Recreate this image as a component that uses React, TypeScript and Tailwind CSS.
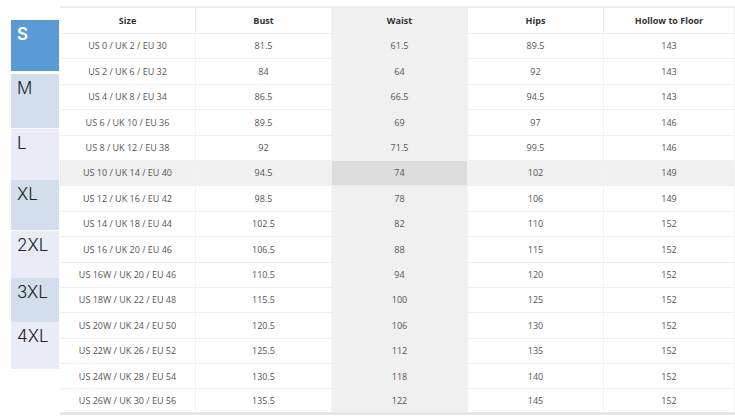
import React from 'react';

const rows = [
  ['US 0 / UK 2 / EU 30', '81.5', '61.5', '89.5', '143'],
  ['US 2 / UK 6 / EU 32', '84', '64', '92', '143'],
  ['US 4 / UK 8 / EU 34', '86.5', '66.5', '94.5', '143'],
  ['US 6 / UK 10 / EU 36', '89.5', '69', '97', '146'],
  ['US 8 / UK 12 / EU 38', '92', '71.5', '99.5', '146'],
  ['US 10 / UK 14 / EU 40', '94.5', '74', '102', '149'],
  ['US 12 / UK 16 / EU 42', '98.5', '78', '106', '149'],
  ['US 14 / UK 18 / EU 44', '102.5', '82', '110', '152'],
  ['US 16 / UK 20 / EU 46', '106.5', '88', '115', '152'],
  ['US 16W / UK 20 / EU 46', '110.5', '94', '120', '152'],
  ['US 18W / UK 22 / EU 48', '115.5', '100', '125', '152'],
  ['US 20W / UK 24 / EU 50', '120.5', '106', '130', '152'],
  ['US 22W / UK 26 / EU 52', '125.5', '112', '135', '152'],
  ['US 24W / UK 28 / EU 54', '130.5', '118', '140', '152'],
  ['US 26W / UK 30 / EU 56', '135.5', '122', '145', '152'],
];

const headers = ['Size', 'Bust', 'Waist', 'Hips', 'Hollow to Floor'];
const widths = ['w-[136px]', 'w-[136px]', 'w-[136px]', 'w-[136px]', 'flex-1'];

// size blocks down the left edge
const labels = [
  { name: 'S', cls: 'h-[51px] bg-[#5b9bd5] text-white font-semibold' },
  { name: 'M', cls: 'h-[54px] mt-[3px] bg-[#d3deec] text-[#222] font-light' },
  { name: 'L', cls: 'h-[51px] mt-px bg-[#e9ecf7] text-[#222] font-light' },
  { name: 'XL', cls: 'h-[50px] bg-[#d3deec] text-[#222] font-light' },
  { name: '2XL', cls: 'h-[47px] mt-px bg-[#e9ecf7] text-[#222] font-light' },
  { name: '3XL', cls: 'h-[44px] bg-[#d3deec] text-[#222] font-light' },
  { name: '4XL', cls: 'h-[47px] bg-[#e9ecf7] text-[#222] font-light' },
];

export default function App() {
  return (
    <div className="w-[735px] h-[416px] bg-white flex overflow-hidden" style={{ fontFamily: '"Open Sans", "Noto Sans", sans-serif' }}>
      <div className="ml-[11px] mt-[20px] w-[48px] flex flex-col">
        {labels.map(l => (
          <div key={l.name} className={`${l.cls} pl-[6px] pt-[4px] text-[17px] leading-[20px]`} style={{ fontFamily: 'Inter, "Noto Sans", sans-serif' }}>
            {l.name}
          </div>
        ))}
      </div>

      <div className="ml-px mt-[6px] flex-1 flex flex-col border-t-2 border-[#ececec]">
        <div className="flex h-[26px] border-b border-[#eeeeee]">
          {headers.map((h, i) => (
            <div key={h} className={`${widths[i]} flex items-center justify-center text-[9px] font-bold text-[#333] border-r border-[#eeeeee] ${i === 2 ? 'bg-[#f0f0f0]' : ''}`}>
              {h}
            </div>
          ))}
        </div>
        {rows.map((r, ri) => {
          const hl = ri === 5;
          return (
            <div key={ri} className={`flex h-[25.4px] border-b ${ri === rows.length - 1 ? 'border-b-[3px] border-[#e6e6e6]' : 'border-[#eeeeee]'} ${hl ? 'bg-[#f0f0f0]' : ''}`}>
              {r.map((c, ci) => (
                <div
                  key={ci}
                  className={`${widths[ci]} flex items-center justify-center text-[9px] text-[#555] border-r border-[#f2f2f2] ${ci === 2 ? (hl ? 'bg-[#dcdcdc]' : 'bg-[#f0f0f0]') : ''}`}
                >
                  {c}
                </div>
              ))}
            </div>
          );
        })}
      </div>
    </div>
  );
}
